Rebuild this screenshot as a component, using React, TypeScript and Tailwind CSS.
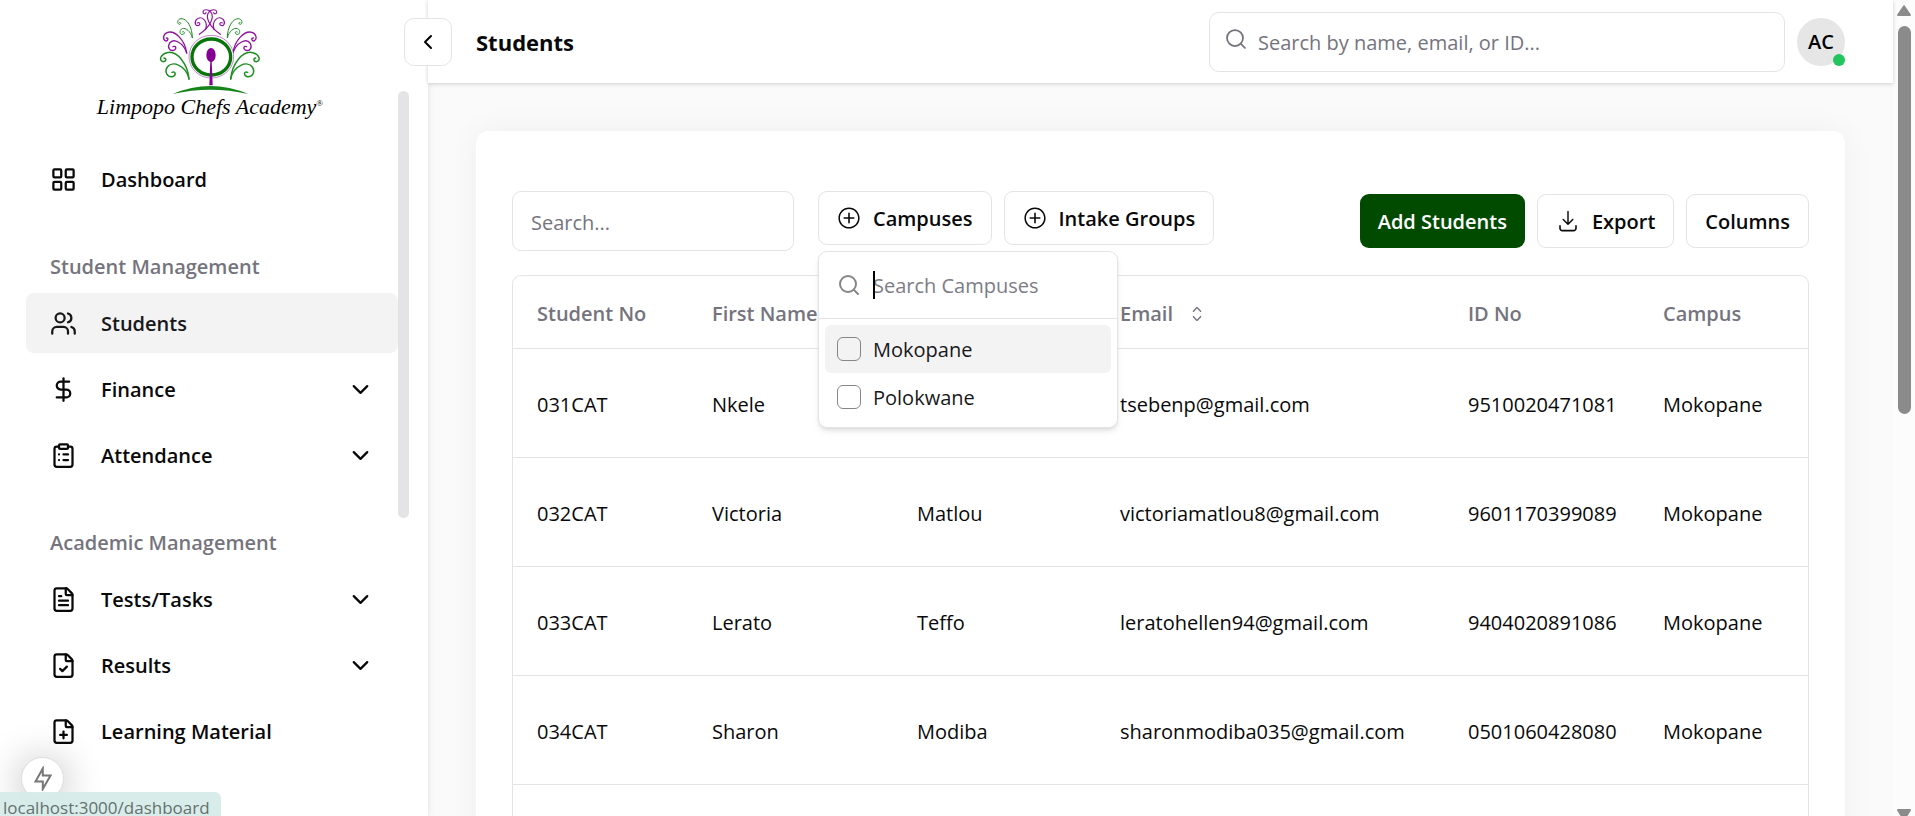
import React from "react";
import {
  ChevronDown,
  ChevronLeft,
  ClipboardList,
  DollarSign,
  FileCheck,
  FilePlus,
  FileText,
  LayoutGrid,
  Search,
  Users,
  type LucideIcon,
} from "lucide-react";
import { RxCaretSort, RxDownload, RxPlusCircled } from "react-icons/rx";

type NavItem = { label: string; icon: LucideIcon; expandable?: boolean; active?: boolean };

const groups: { title?: string; items: NavItem[] }[] = [
  { items: [{ label: "Dashboard", icon: LayoutGrid }] },
  {
    title: "Student Management",
    items: [
      { label: "Students", icon: Users, active: true },
      { label: "Finance", icon: DollarSign, expandable: true },
      { label: "Attendance", icon: ClipboardList, expandable: true },
    ],
  },
  {
    title: "Academic Management",
    items: [
      { label: "Tests/Tasks", icon: FileText, expandable: true },
      { label: "Results", icon: FileCheck, expandable: true },
      { label: "Learning Material", icon: FilePlus },
    ],
  },
];

const students = [
  ["031CAT", "Nkele", "", "tsebenp@gmail.com", "9510020471081", "Mokopane"],
  ["032CAT", "Victoria", "Matlou", "victoriamatlou8@gmail.com", "9601170399089", "Mokopane"],
  ["033CAT", "Lerato", "Teffo", "leratohellen94@gmail.com", "9404020891086", "Mokopane"],
  ["034CAT", "Sharon", "Modiba", "sharonmodiba035@gmail.com", "0501060428080", "Mokopane"],
  ["", "", "", "", "", ""],
];

function Swirls() {
  return (
    <g fill="none" strokeLinecap="round">
      <g stroke="#1f8f24" strokeWidth="4.5">
        <path d="M326 236C322 190 290 150 260 157C240 162 234 182 249 184C258 184 259 174 251 173" />
        <path d="M326 236C318 195 275 180 261 200C251 216 262 231 276 229C289 225 286 211 275 216" />
      </g>
      <g stroke="#8f12a0" strokeWidth="4">
        <path d="M319 158C314 120 285 90 262 96C248 100 246 118 256 122C264 122 265 112 258 113" />
        <path d="M319 158C310 128 280 112 268 128C260 141 268 153 280 150C290 146 287 135 278 139" />
      </g>
      <g stroke="#1f8f24" strokeWidth="3">
        <path d="M336 112C336 80 320 54 302 55C290 57 290 70 297 72C302 72 303 66 298 66" />
        <path d="M336 112C330 88 308 76 300 90C296 100 304 105 310 101C315 96 310 91 306 95" />
      </g>
      <g stroke="#8f12a0" strokeWidth="3.5">
        <path d="M357 102C392 78 402 50 392 36C386 26 370 26 368 34C367 42 376 42 377 37" />
        <path d="M376 88C384 60 362 44 348 58C340 70 348 79 356 75C362 70 356 64 351 68" />
      </g>
    </g>
  );
}

function Logo() {
  return (
    <a href="#home" aria-label="Limpopo Chefs Academy" className="flex flex-col items-center">
      <svg viewBox="230 20 315 270" className="h-[90px] w-[105px] shrink-0" aria-hidden="true">
        <Swirls />
        <g transform="translate(777 0) scale(-1 1)">
          <Swirls />
        </g>
        <ellipse cx="393" cy="169" rx="67" ry="64" fill="#fff" stroke="#a04bad" strokeWidth="2" />
        <ellipse cx="393" cy="170" rx="58" ry="54" fill="#fff" stroke="#08750b" strokeWidth="10" />
        <ellipse cx="392" cy="164" rx="14" ry="21" fill="#860093" />
        <path d="M390 180L387 255H397L394 180Z" fill="#860093" />
        <path d="M277 281Q390 233 504 281Q390 255 277 281Z" fill="#15851a" />
      </svg>
      <span className="flex font-['Liberation_Serif',serif] text-[22px] leading-5 whitespace-nowrap text-black italic">
        Limpopo Chefs Academy
        <span className="text-[9px] leading-3 not-italic">®</span>
      </span>
    </a>
  );
}

function NavRow({ item }: { item: NavItem }) {
  const Icon = item.icon;
  const tone = item.active ? "bg-[#f3f3f3] text-[#18181b]" : "text-[#09090b]";
  const body = (
    <>
      <Icon size={27} strokeWidth={2} className="shrink-0" />
      <span className="flex-1 pt-0.5 text-left">{item.label}</span>
      {item.expandable && <ChevronDown size={27} />}
    </>
  );
  const cls = `flex h-[60px] w-full items-center gap-6 rounded-lg pr-6 pl-6 font-semibold ${tone}`;
  return item.expandable ? (
    <button type="button" className={cls}>{body}</button>
  ) : (
    <a href="#section" className={cls}>{body}</a>
  );
}

function Sidebar() {
  return (
    <aside className="flex h-full w-[428px] shrink-0 flex-col bg-white shadow-[0_0_6px_rgba(0,0,0,0.12)]">
      <div className="flex h-[91px] shrink-0 justify-center pt-[7px] pr-2">
        <Logo />
      </div>
      <div className="flex min-h-0 flex-1 overflow-hidden pl-[26px]">
        <nav className="flex flex-1 flex-col gap-9 pt-[58px]">
          {groups.map((g, i) => (
            <section key={i} className="flex flex-col">
              {g.title && (
                <h2 className="pb-1 pl-6 leading-[44px] font-semibold text-[#75747e]">
                  {g.title}
                </h2>
              )}
              <div className="flex flex-col gap-1.5">
                {g.items.map((item) => (
                  <NavRow key={item.label} item={item} />
                ))}
              </div>
            </section>
          ))}
        </nav>
        <div className="mr-[19px] h-[427px] w-[11px] shrink-0 rounded-full bg-[#e4e4e7]" />
      </div>
    </aside>
  );
}

function Header() {
  return (
    <header className="z-10 flex h-[83px] shrink-0 items-center justify-between bg-white pr-12 shadow-[0_1px_4px_rgba(0,0,0,0.18)]">
      <div className="-ml-6 flex items-center gap-6">
        <button
          type="button"
          aria-label="Collapse sidebar"
          className="flex size-12 items-center justify-center rounded-[10px] border border-[#e4e4e7] bg-white text-black"
        >
          <ChevronLeft size={24} />
        </button>
        <h1 className="text-[22px] font-bold text-[#09090b]">Students</h1>
      </div>
      <div className="flex items-center gap-3">
        <label className="flex h-[60px] w-[576px] items-center gap-2.5 rounded-[10px] border border-[#e4e4e7] bg-white px-[14px]">
          <Search size={24} strokeWidth={1.75} className="mb-1.5 shrink-0 text-[#71717a]" />
          <input
            type="search"
            aria-label="Search students"
            placeholder="Search by name, email, or ID..."
            className="min-w-0 flex-1 pt-0.5 outline-none placeholder:text-[#75747e]"
          />
        </label>
        <button
          type="button"
          className="relative flex size-12 items-center justify-center rounded-full bg-[#e6e6e6] font-semibold text-black"
        >
          AC
          <span className="absolute right-0 bottom-0 size-3 rounded-full bg-[#22c55e]" />
        </button>
      </div>
    </header>
  );
}

const outline =
  "flex h-[54px] items-center rounded-[9px] border border-[#e4e4e7] bg-white px-[18px] font-semibold text-[#09090b] whitespace-nowrap";

function CampusMenu() {
  return (
    <div className="absolute top-[60px] left-0 z-20 w-[300px] rounded-[9px] border border-[#e4e4e7] bg-white shadow-md">
      <label className="flex h-[67px] items-center gap-3 border-b border-[#e4e4e7] px-[18px]">
        <Search size={24} strokeWidth={2} className="shrink-0 text-[#868686]" />
        <span className="relative flex min-w-0 flex-1 items-center">
          <span className="absolute left-0 h-7 w-0.5 bg-black" />
          <input
            type="text"
            aria-label="Search Campuses"
            placeholder="Search Campuses"
            className="w-full pt-0.5 outline-none placeholder:text-[#7d7c86]"
          />
        </span>
      </label>
      <div className="p-1.5">
        {["Mokopane", "Polokwane"].map((name, i) => (
          <label
            key={name}
            className={`flex h-12 items-center gap-3 rounded-md px-3 text-[#18181b] ${i === 0 ? "bg-[#f3f3f3]" : ""}`}
          >
            <input
              type="checkbox"
              className="size-6 appearance-none rounded-md border border-[#868686]"
            />
            <span className="pt-0.5">{name}</span>
          </label>
        ))}
      </div>
    </div>
  );
}

function Toolbar() {
  return (
    <div className="flex items-center justify-between">
      <div className="flex items-start">
        <input
          type="text"
          aria-label="Filter students"
          placeholder="Search..."
          className="mr-6 h-[60px] w-[282px] rounded-[9px] border border-[#e4e4e7] px-[18px] pt-0.5 outline-none placeholder:text-[#75747e]"
        />
        <div className="relative mr-3">
          <button type="button" aria-expanded="true" className={`${outline} gap-3`}>
            <RxPlusCircled size={24} />
            <span className="pt-0.5">Campuses</span>
          </button>
          <CampusMenu />
        </div>
        <button type="button" className={`${outline} gap-3`}>
          <RxPlusCircled size={24} />
          <span className="pt-0.5">Intake Groups</span>
        </button>
      </div>
      <div className="flex gap-3">
        <button
          type="button"
          className="h-[54px] rounded-[9px] bg-[#004b00] px-[18px] pt-0.5 font-semibold whitespace-nowrap text-white"
        >
          Add Students
        </button>
        <button type="button" className={`${outline} gap-3`}>
          <RxDownload size={24} />
          <span className="pt-0.5">Export</span>
        </button>
        <button type="button" className={outline}>
          <span className="pt-0.5">Columns</span>
        </button>
      </div>
    </div>
  );
}

function StudentTable() {
  const th = "px-6 pt-1 text-left font-semibold text-[#75747e] whitespace-nowrap";
  return (
    <div className="mt-6 overflow-hidden rounded-[9px] border border-[#e4e4e7]">
      <table className="w-full table-fixed">
        <colgroup>
          <col className="w-[175px]" />
          <col className="w-[205px]" />
          <col className="w-[203px]" />
          <col className="w-[348px]" />
          <col className="w-[195px]" />
          <col className="w-[169px]" />
        </colgroup>
        <thead>
          <tr className="h-[72px] border-b border-[#e4e4e7]">
            <th className={th}>Student No</th>
            <th className={th}>First Name</th>
            <th className={th} aria-label="Last Name" />
            <th className={th}>
              <button type="button" className="flex items-center gap-3">
                Email
                <RxCaretSort size={24} />
              </button>
            </th>
            <th className={th}>ID No</th>
            <th className={th}>Campus</th>
          </tr>
        </thead>
        <tbody>
          {students.map((row, i) => (
            <tr key={i} className="h-[109px] border-b border-[#e4e4e7]">
              {row.map((cell, j) => (
                <td key={j} className="px-6 pt-1 whitespace-nowrap">
                  {cell}
                </td>
              ))}
            </tr>
          ))}
        </tbody>
      </table>
    </div>
  );
}

function PageScrollbar() {
  return (
    <div className="flex h-full w-[22px] shrink-0 flex-col items-center justify-between bg-[#fcfcfc] pt-[5px]" aria-hidden="true">
      <div className="flex flex-col items-center gap-2.5">
        <svg viewBox="0 0 14 11" className="h-[11px] w-[14px]">
          <path d="M7 1.2L13 10H1Z" fill="#8b8b8b" stroke="#8b8b8b" strokeWidth="2" strokeLinejoin="round" />
        </svg>
        <div className="h-[388px] w-[13px] rounded-full bg-[#8b8b8b]" />
      </div>
      <svg viewBox="0 0 14 7" className="h-[7px] w-[14px]">
        <path d="M1 1H13L8 9H6Z" fill="#8b8b8b" stroke="#8b8b8b" strokeWidth="2" strokeLinejoin="round" />
      </svg>
    </div>
  );
}

export default function App() {
  return (
    <div className="relative flex h-screen overflow-hidden bg-[#fafafa] font-['Open_Sans','Noto_Sans',sans-serif] text-[20px] leading-7 text-[#09090b]">
      <Sidebar />
      <div className="flex min-w-0 flex-1 flex-col">
        <Header />
        <main className="min-h-0 flex-1 overflow-hidden px-12 pt-12">
          <div className="min-h-screen rounded-xl bg-white px-9 pt-[60px] shadow-[0_0_30px_rgba(0,0,0,0.05)]">
            <Toolbar />
            <StudentTable />
          </div>
        </main>
      </div>
      <PageScrollbar />
      <button
        type="button"
        aria-label="Developer tools"
        className="absolute bottom-4 left-[21px] flex size-[43px] items-center justify-center rounded-full border border-[#dedede] bg-white text-[#777] shadow-[0_4px_40px_rgba(0,0,0,0.3)]"
      >
        <svg viewBox="0 0 18 25" className="h-[25px] w-[18px]" fill="none" stroke="currentColor" strokeWidth="2" aria-hidden="true">
          <path d="M8.8 2.5L1.5 15.5H8.8V23L16.5 9.5H8.8Z" />
        </svg>
      </button>
      <div className="absolute bottom-0 left-0 h-6 w-[221px] overflow-hidden rounded-tr-md bg-[#d6ece8]/95 pt-1 pl-[3px] text-[17px] leading-6 text-[#63716f]">
        localhost:3000/dashboard
      </div>
    </div>
  );
}
